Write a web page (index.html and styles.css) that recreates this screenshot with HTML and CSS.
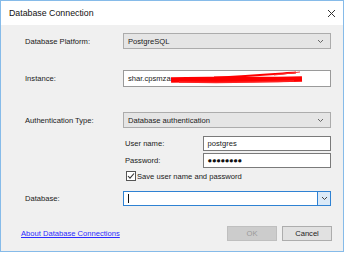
FILE: index.html
```html
<!DOCTYPE html>
<html>
<head>
  <meta charset="UTF-8">
  <title>Database Connection</title>
  <link rel="stylesheet" href="styles.css">
</head>
<body>
  <div class="dialog">
    <div class="titlebar">
      <span class="title">Database Connection</span>
      <svg class="close" width="9" height="9" viewBox="0 0 9 9"><path d="M1 1L8 8M8 1L1 8" stroke="#333" stroke-width="1" fill="none"/></svg>
    </div>

    <div class="body">
      <div class="row platform">
        <span class="label">Database Platform:</span>
        <div class="combo">
          <span class="value">PostgreSQL</span>
          <svg class="chev" width="7" height="5" viewBox="0 0 7 5"><path d="M1 1L3.5 3.5L6 1" stroke="#666" fill="none"/></svg>
        </div>
      </div>

      <div class="row instance">
        <span class="label">Instance:</span>
        <div class="input">
          <span class="value">shar.cpsmza</span>
          <svg class="scribble" width="208" height="17" viewBox="0 0 208 17">
            <path d="M47 9C80 7.5 120 9.5 178 8" stroke="#f00" stroke-width="5.5" fill="none"/>
            <path d="M90 6.5C125 5 150 3 172 1.5" stroke="#f00" stroke-width="2" fill="none"/>
            <path d="M55 11C100 12 140 11 170 10" stroke="#f22" stroke-width="1.5" fill="none"/>
            <path d="M150 4C160 3 168 2 176 1" stroke="#f33" stroke-width="1" fill="none"/>
          </svg>
        </div>
      </div>

      <div class="row auth">
        <span class="label">Authentication Type:</span>
        <div class="combo">
          <span class="value">Database authentication</span>
          <svg class="chev" width="7" height="5" viewBox="0 0 7 5"><path d="M1 1L3.5 3.5L6 1" stroke="#666" fill="none"/></svg>
        </div>
      </div>

      <div class="sub user">
        <span class="label">User name:</span>
        <div class="input small"><span class="value">postgres</span></div>
      </div>
      <div class="sub pass">
        <span class="label">Password:</span>
        <div class="input small"><span class="value dots">&#9679;&#9679;&#9679;&#9679;&#9679;&#9679;&#9679;&#9679;</span></div>
      </div>
      <div class="sub save">
        <span class="check">
          <svg width="8" height="8" viewBox="0 0 8 8"><path d="M1 4L3 6.2L7 1.5" stroke="#333" stroke-width="1.1" fill="none"/></svg>
        </span>
        <span class="check-label">Save user name and password</span>
      </div>

      <div class="row database">
        <span class="label">Database:</span>
        <div class="combo focus">
          <span class="value"><span class="caret"></span></span>
          <span class="drop">
            <svg width="7" height="5" viewBox="0 0 7 5"><path d="M1 1L3.5 3.5L6 1" stroke="#444" fill="none"/></svg>
          </span>
        </div>
      </div>

      <div class="footer">
        <a class="link" href="#">About Database Connections</a>
        <div class="buttons">
          <span class="btn disabled">OK</span>
          <span class="btn">Cancel</span>
        </div>
      </div>
    </div>
  </div>
</body>
</html>
```

FILE: styles.css
```css
* {
  box-sizing: border-box;
  margin: 0;
  padding: 0;
}

body {
  background: #fff;
  font-family: "Liberation Sans", Arial, sans-serif;
  font-size: 7.6px;
  color: #1a1a1a;
}

.dialog {
  width: 344px;
  height: 252px;
  border: 1px solid #86bbe9;
  background: #f0f0f0;
  display: flex;
  flex-direction: column;
}

.titlebar {
  height: 24px;
  background: #fff;
  display: flex;
  align-items: center;
  justify-content: space-between;
  padding: 0 7px 0 8px;
}

.title {
  font-size: 8.8px;
  color: #111;
}

.body {
  flex: 1;
  padding: 8px 12px 0 24px;
  display: flex;
  flex-direction: column;
}

.row {
  display: flex;
  align-items: center;
}

.row .label {
  width: 98px;
}

.combo,
.input {
  width: 208px;
  display: flex;
  align-items: center;
  position: relative;
}

.combo {
  height: 16px;
  background: #e5e5e5;
  border: 1px solid #acacac;
  padding: 0 6px 0 4px;
  justify-content: space-between;
}

.input {
  height: 17px;
  background: #fff;
  border: 1px solid #9a9a9a;
  padding: 0 4px;
}

.scribble {
  position: absolute;
  left: 0;
  top: 0;
}

.instance {
  margin-top: 21px;
}

.auth {
  margin-top: 25px;
}

.sub {
  display: flex;
  align-items: center;
  margin-left: 100px;
}

.sub .label {
  width: 78px;
}

.input.small {
  width: 129px;
  height: 15px;
  border-color: #7a7a7a;
}

.user {
  margin-top: 8px;
}

.pass {
  margin-top: 2px;
}

.dots {
  font-size: 7.6px;
  letter-spacing: -0.3px;
  color: #111;
}

.save {
  margin-top: 3px;
  margin-left: 101px;
}

.check {
  width: 10px;
  height: 10px;
  border: 1px solid #555;
  background: #fff;
  display: flex;
  align-items: center;
  justify-content: center;
  margin-right: 1px;
}

.database {
  margin-top: 10px;
}

.combo.focus {
  height: 15px;
  background: #fff;
  border-color: #2f82d3;
  padding: 0 0 0 4px;
}

.caret {
  display: block;
  width: 1px;
  height: 9px;
  background: #111;
}

.drop {
  width: 13px;
  height: 100%;
  background: #dbeaf8;
  border-left: 1px solid #2f82d3;
  display: flex;
  align-items: center;
  justify-content: center;
}

.footer {
  margin-top: 20px;
  margin-left: -4px;
  margin-right: -1px;
  display: flex;
  align-items: center;
  justify-content: space-between;
}

.link {
  color: #2b2bff;
  text-decoration: underline;
}

.buttons {
  display: flex;
  gap: 5px;
}

.btn {
  width: 50px;
  height: 15px;
  border: 1px solid #adadad;
  background: #e1e1e1;
  display: flex;
  align-items: center;
  justify-content: center;
}

.btn.disabled {
  background: #cccccc;
  border-color: #bfbfbf;
  color: #9a9a9a;
}
```
